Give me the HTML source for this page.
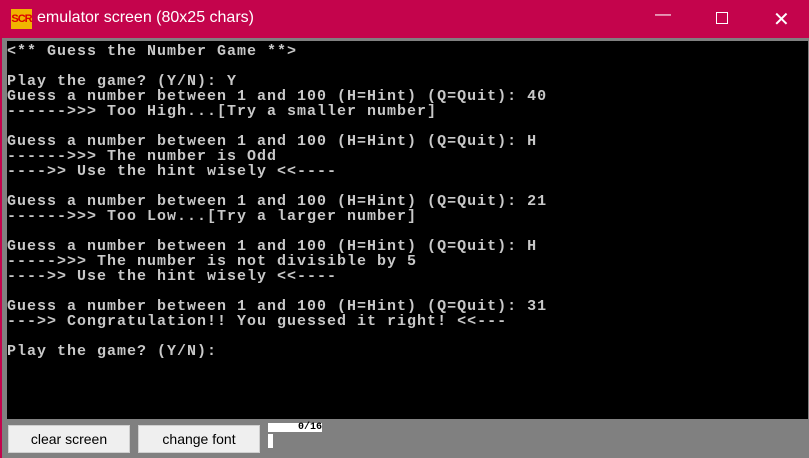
<!DOCTYPE html>
<html><head><style>
*{margin:0;padding:0;box-sizing:border-box}
body{width:809px;height:458px;overflow:hidden;background:#808080;position:relative;font-family:"Liberation Sans",sans-serif}
#tb{position:absolute;left:0;top:0;width:809px;height:38px;background:#c4044c}
#ic{position:absolute;left:11px;top:9px;width:21px;height:20px;background:#f0b400;color:#d00;font:bold 11px "Liberation Sans",sans-serif;line-height:20px;text-align:center;letter-spacing:-1px}
#tt{position:absolute;left:37px;top:9px;color:#fff;font-size:16px}
.c{position:absolute;top:6px;color:#fff;font-size:16px}
#side{position:absolute;left:0;top:38px;width:2px;height:420px;background:#c4044c}
#scr{position:absolute;left:7px;top:41px;width:801px;height:378px;background:#000}
pre{position:absolute;left:7px;top:44px;color:#c8c8c8;font:bold 15px/15px "Liberation Mono",monospace;letter-spacing:1px}
.b{position:absolute;top:425px;width:122px;height:28px;background:#efefef;border:1px solid #d0d0d0;font-size:14px;text-align:center;line-height:26px;color:#000}
</style></head><body>
<div id="tb"><div id="ic">SCR</div><div id="tt">emulator screen (80x25 chars)</div>
<div class="c" style="left:655px">&#8212;</div>
<div class="c" style="left:716px;top:12px;width:12px;height:12px;border:1px solid #fff"></div>
<div class="c" style="left:773px;top:7px;font-size:20px">&#x2715;</div></div>
<div id="side"></div>
<div id="scr"></div>
<pre>&lt;** Guess the Number Game **&gt;

Play the game? (Y/N): Y
Guess a number between 1 and 100 (H=Hint) (Q=Quit): 40
------&gt;&gt;&gt; Too High...[Try a smaller number]

Guess a number between 1 and 100 (H=Hint) (Q=Quit): H
------&gt;&gt;&gt; The number is Odd
----&gt;&gt; Use the hint wisely &lt;&lt;----

Guess a number between 1 and 100 (H=Hint) (Q=Quit): 21
------&gt;&gt;&gt; Too Low...[Try a larger number]

Guess a number between 1 and 100 (H=Hint) (Q=Quit): H
-----&gt;&gt;&gt; The number is not divisible by 5
----&gt;&gt; Use the hint wisely &lt;&lt;----

Guess a number between 1 and 100 (H=Hint) (Q=Quit): 31
---&gt;&gt; Congratulation!! You guessed it right! &lt;&lt;---

Play the game? (Y/N):</pre>
<div class="b" style="left:8px">clear screen</div>
<div class="b" style="left:138px">change font</div>
<div style="position:absolute;left:268px;top:423px;width:54px;height:9px;background:#fff;font:bold 10px/9px 'Liberation Mono',monospace;text-align:right;color:#000">0/16</div>
<div style="position:absolute;left:268px;top:434px;width:5px;height:14px;background:#fff"></div>
</body></html>
